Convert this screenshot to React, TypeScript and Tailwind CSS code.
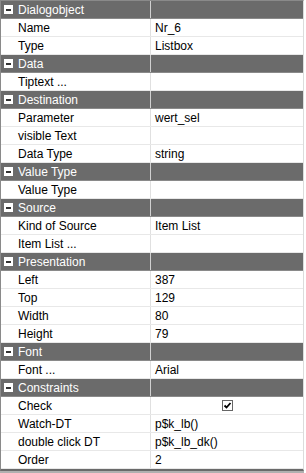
import React from "react";

type Row =
  | { kind: "head"; label: string }
  | { kind: "item"; label: string; value?: string; check?: boolean };

const ROWS: Row[] = [
  { kind: "head", label: "Dialogobject" },
  { kind: "item", label: "Name", value: "Nr_6" },
  { kind: "item", label: "Type", value: "Listbox" },
  { kind: "head", label: "Data" },
  { kind: "item", label: "Tiptext ..." },
  { kind: "head", label: "Destination" },
  { kind: "item", label: "Parameter", value: "wert_sel" },
  { kind: "item", label: "visible Text" },
  { kind: "item", label: "Data Type", value: "string" },
  { kind: "head", label: "Value Type" },
  { kind: "item", label: "Value Type" },
  { kind: "head", label: "Source" },
  { kind: "item", label: "Kind of Source", value: "Item List" },
  { kind: "item", label: "Item List ..." },
  { kind: "head", label: "Presentation" },
  { kind: "item", label: "Left", value: "387" },
  { kind: "item", label: "Top", value: "129" },
  { kind: "item", label: "Width", value: "80" },
  { kind: "item", label: "Height", value: "79" },
  { kind: "head", label: "Font" },
  { kind: "item", label: "Font ...", value: "Arial" },
  { kind: "head", label: "Constraints" },
  { kind: "item", label: "Check", check: true },
  { kind: "item", label: "Watch-DT", value: "p$k_lb()" },
  { kind: "item", label: "double click DT", value: "p$k_lb_dk()" },
  { kind: "item", label: "Order", value: "2" },
];

function MinusBox() {
  return (
    <span className="w-[9px] h-[9px] bg-white flex items-center justify-center shrink-0">
      <span className="w-[5px] h-[2px] bg-[#333]" />
    </span>
  );
}

function CheckBox() {
  return (
    <span className="w-[11px] h-[11px] border border-[#666] bg-white flex items-center justify-center">
      <svg width="9" height="9" viewBox="0 0 9 9">
        <path d="M1.5 4.5 L3.5 6.5 L7.5 2" stroke="#000" strokeWidth="1.8" fill="none" />
      </svg>
    </span>
  );
}

export default function App() {
  return (
    <div className="w-[306px] h-[473px] bg-white font-['Liberation_Sans',Arial,sans-serif] text-[12px] leading-none">
      <div className="w-[304px] border-l border-t border-[#8a8a8a] border-r border-r-[#dcdcdc] border-b-2 border-b-[#6a6a6a]">
        {ROWS.map((row, i) =>
          row.kind === "head" ? (
            <div key={i} className="grid grid-cols-[150px_1fr] h-[18px] bg-[#6b6b6b] text-white border-b border-[#8a8a8a]">
              <div className="flex items-center gap-[5px] pl-[3px] border-r border-[#d0d0d0]">
                <MinusBox />
                <span>{row.label}</span>
              </div>
              <div />
            </div>
          ) : (
            <div key={i} className="grid grid-cols-[150px_1fr] h-[18px] bg-white text-black border-b border-[#e8e8e8]">
              <div className="flex items-center pl-[17px] border-r border-[#e0e0e0]">{row.label}</div>
              <div className="flex items-center pl-[4px]">
                {row.check ? (
                  <div className="w-full flex justify-center pr-[4px]">
                    <CheckBox />
                  </div>
                ) : (
                  row.value
                )}
              </div>
            </div>
          )
        )}
      </div>
      <div className="w-[304px] h-[2px] bg-[#b0b0b0]" />
    </div>
  );
}
